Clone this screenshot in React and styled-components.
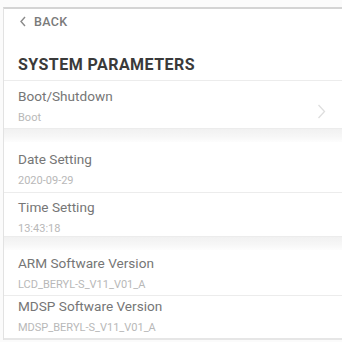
import styled, { createGlobalStyle } from "styled-components"

const Global = createGlobalStyle`
  html, body {
    margin: 0;
    padding: 0;
    background: #fbfbfb;
    font-family: Roboto, "Liberation Sans", sans-serif;
  }
`

const Frame = styled.div`
  margin: 7px 0 0 3px;
  height: 331px;
  background: #fff;
  border-top: 2px solid #d4d4d4;
  border-left: 1px solid #e2e2e2;
  overflow: hidden;
`

const Header = styled.div`
  padding: 0 14px;
  height: 72px;
  box-sizing: border-box;
  border-bottom: 1px solid #ececec;
`

const Back = styled.div`
  display: flex;
  align-items: center;
  gap: 8px;
  height: 24px;
  color: #7a7a7a;
  font-size: 12.5px;
  font-weight: 500;
  letter-spacing: 0.3px;
  margin-left: 2px;
`

const Title = styled.div`
  margin-top: 22px;
  color: #3a3a3a;
  font-size: 16px;
  font-weight: 700;
  letter-spacing: 0.45px;
`

const Item = styled.div`
  display: flex;
  align-items: flex-start;
  height: ${p => p.h}px;
  padding: ${p => p.pt}px 14px 0 14px;
  box-sizing: border-box;
  border-bottom: 1px solid ${p => (p.last ? "transparent" : "#ececec")};
`

const Texts = styled.div`
  flex: 1;
  display: flex;
  flex-direction: column;
  gap: 7px;
`

const Label = styled.div`
  color: #767676;
  font-size: 13.6px;
  line-height: 15px;
`

const Value = styled.div`
  color: #b8b8b8;
  font-size: 11px;
  line-height: 13px;
`

const Band = styled.div`
  height: ${p => p.h}px;
  background: linear-gradient(#f1f1f1, #f7f7f7 60%, #fdfdfd);
`

const Bottom = styled.div`
  border-top: 2px solid #e6e6e6;
`

const ChevronBox = styled.div`
  align-self: center;
  margin: 6px 2px 0 0;
  display: flex;
`

const Chevron = () => (
  <ChevronBox>
    <svg width="9" height="15" viewBox="0 0 9 15">
      <path d="M1.5 1 L7.5 7.5 L1.5 14" fill="none" stroke="#dedede" strokeWidth="1.3" />
    </svg>
  </ChevronBox>
)

const BackArrow = () => (
  <svg width="6" height="11" viewBox="0 0 6 11">
    <path d="M5 1 L1 5.5 L5 10" fill="none" stroke="#8a8a8a" strokeWidth="1.4" />
  </svg>
)

export default function App() {
  return (
    <>
      <Global />
      <Frame>
        <Header>
          <Back>
            <BackArrow />
            BACK
          </Back>
          <Title>SYSTEM PARAMETERS</Title>
        </Header>
        <Item h={48} pt={8}>
          <Texts>
            <Label>Boot/Shutdown</Label>
            <Value>Boot</Value>
          </Texts>
          <Chevron />
        </Item>
        <Band h={13} />
        <Item h={51} pt={10}>
          <Texts>
            <Label>Date Setting</Label>
            <Value>2020-09-29</Value>
          </Texts>
        </Item>
        <Item h={44} pt={7}>
          <Texts>
            <Label>Time Setting</Label>
            <Value>13:43:18</Value>
          </Texts>
        </Item>
        <Band h={13} />
        <Item h={46} pt={6}>
          <Texts>
            <Label>ARM Software Version</Label>
            <Value>LCD_BERYL-S_V11_V01_A</Value>
          </Texts>
        </Item>
        <Item h={42} pt={3} last>
          <Texts>
            <Label>MDSP Software Version</Label>
            <Value>MDSP_BERYL-S_V11_V01_A</Value>
          </Texts>
        </Item>
        <Bottom />
      </Frame>
    </>
  )
}
